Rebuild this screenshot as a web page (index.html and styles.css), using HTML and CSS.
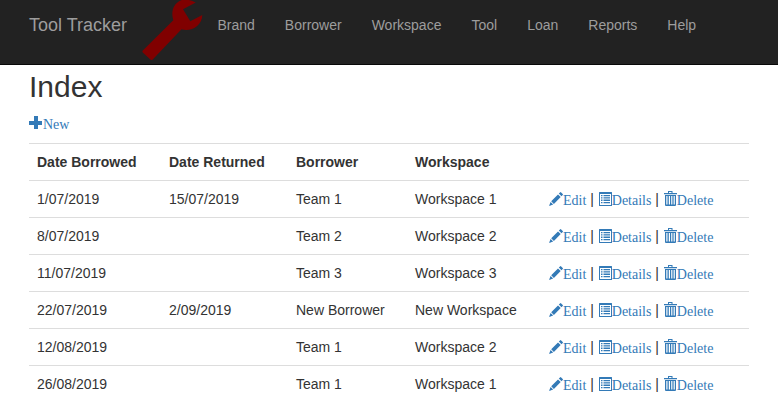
FILE: index.html
```
<!DOCTYPE html>
<html lang="en">
<head>
<meta charset="utf-8">
<title>Index - Tool Tracker</title>
<link rel="stylesheet" href="styles.css">
</head>
<body>
<svg class="sprite" aria-hidden="true">
  <symbol id="plus" viewBox="0 0 14 14"><path d="M5 0h4v5h4v4H9v4H5V9H0V5h5z"/></symbol>
  <symbol id="pencil" viewBox="0 0 14 14"><path d="M11 .4q.6-.6 1.200 0l1.500 1.500q.6.600 0 1.200l-1.200 1.200-2.700-2.700zM9 2.400l2.700 2.700-6.800 6.900-2.700-2.700zM1.600 10l2.600 2.600L0 14z"/></symbol>
  <symbol id="list" viewBox="0 0 14 14"><path fill-rule="evenodd" d="M1.500 0h12q.5 0 .5.500v13q0 .5-.5.500h-12q-.5 0-.5-.500V.5Q1 0 1.500 0zM2 2v11h11V2zM3 3h1.500v1.300H3zm2.500 0H12v1.300H5.500zM3 5.300h1.500v1.300H3zm2.500 0H12v1.300H5.500zM3 7.600h1.500v1.300H3zm2.500 0H12v1.300H5.500zM3 9.900h1.500v1.300H3zm2.500 0H12v1.300H5.500z"/></symbol>
  <symbol id="trash" viewBox="0 0 14 15"><path fill-rule="evenodd" d="M5 0h4.500v2H14v1.200H1V2h4zm1 1v1h2.500V1zM2 4h11v10q0 1-1 1H3q-1 0-1-1zM3.300 5v8.500h1.200V5zm2.500 0v8.500H7V5zm2.400 0v8.500h1.200V5zm2.400 0v8.500h1.200V5z"/></symbol>
</svg>
<nav class="navbar">
  <a class="brand">Tool Tracker</a>
  <svg class="wrench" viewBox="0 0 62 62" aria-hidden="true"><path d="M.8 50.500Q-.1 51.500.8 52.500L8.700 59.700Q9.700 60.500 10.700 59.500L39.500 29.300C49 32 60 26 60.300 15L48.300 21.300 41 9.300 53.700 2.500C49 0 43-1.500 38.500.5 32 3.500 28.500 11 31.300 20.300Z"/></svg>
  <ul class="menu">
    <li>Brand</li><li>Borrower</li><li>Workspace</li><li>Tool</li><li>Loan</li><li>Reports</li><li>Help</li>
  </ul>
</nav>
<main class="content">
  <h2>Index</h2>
  <p class="create"><a class="action"><svg><use href="#plus"/></svg>New</a></p>
  <table class="table">
    <colgroup><col class="borrowed"><col class="returned"><col class="borrower"><col class="workspace"><col></colgroup>
    <tr><th>Date Borrowed</th><th>Date Returned</th><th>Borrower</th><th>Workspace</th><th></th></tr>
    <tr><td>1/07/2019</td><td>15/07/2019</td><td>Team 1</td><td>Workspace 1</td><td><a class="action"><svg><use href="#pencil"/></svg>Edit</a> | <a class="action"><svg><use href="#list"/></svg>Details</a> | <a class="action"><svg class="bin"><use href="#trash"/></svg>Delete</a></td></tr>
    <tr><td>8/07/2019</td><td></td><td>Team 2</td><td>Workspace 2</td><td><a class="action"><svg><use href="#pencil"/></svg>Edit</a> | <a class="action"><svg><use href="#list"/></svg>Details</a> | <a class="action"><svg class="bin"><use href="#trash"/></svg>Delete</a></td></tr>
    <tr><td>11/07/2019</td><td></td><td>Team 3</td><td>Workspace 3</td><td><a class="action"><svg><use href="#pencil"/></svg>Edit</a> | <a class="action"><svg><use href="#list"/></svg>Details</a> | <a class="action"><svg class="bin"><use href="#trash"/></svg>Delete</a></td></tr>
    <tr><td>22/07/2019</td><td>2/09/2019</td><td>New Borrower</td><td>New Workspace</td><td><a class="action"><svg><use href="#pencil"/></svg>Edit</a> | <a class="action"><svg><use href="#list"/></svg>Details</a> | <a class="action"><svg class="bin"><use href="#trash"/></svg>Delete</a></td></tr>
    <tr><td>12/08/2019</td><td></td><td>Team 1</td><td>Workspace 2</td><td><a class="action"><svg><use href="#pencil"/></svg>Edit</a> | <a class="action"><svg><use href="#list"/></svg>Details</a> | <a class="action"><svg class="bin"><use href="#trash"/></svg>Delete</a></td></tr>
    <tr><td>26/08/2019</td><td></td><td>Team 1</td><td>Workspace 1</td><td><a class="action"><svg><use href="#pencil"/></svg>Edit</a> | <a class="action"><svg><use href="#list"/></svg>Details</a> | <a class="action"><svg class="bin"><use href="#trash"/></svg>Delete</a></td></tr>
  </table>
</main>
</body>
</html>
```
FILE: styles.css
```
* { box-sizing: border-box; }
body {
  margin: 0;
  overflow: hidden;
  font: 14px/20px "Liberation Sans", Arial, sans-serif;
  color: #333;
  background: #fff;
}
.sprite { display: none; }
.navbar {
  display: flex;
  height: 65px;
  padding-left: 29px;
  background: #222;
  border-bottom: 1px solid #080808;
  color: #9d9d9d;
}
.brand { width: 113px; padding-top: 15px; font-size: 18px; }
.wrench { width: 62px; height: 62px; fill: #800000; flex: none; }
.menu { display: flex; margin: 0 0 0 -1.5px; padding: 15px 0 0; list-style: none; }
.menu li { padding: 0 15px; }
.content { padding: 0 29px; }
h2 { margin: 5px 0 10px; font-size: 30px; font-weight: 400; line-height: 33px; }
.create { margin: 0 0 10px; height: 20px; }
.action {
  display: inline-block;
  position: relative;
  top: 1px;
  font-family: "Liberation Serif", "Times New Roman", serif;
  line-height: 14px;
  color: #337ab7;
}
.action svg {
  width: 14px;
  height: 14px;
  fill: currentColor;
  vertical-align: -1px;
}
.action .bin { height: 15px; margin-top: -1px; }
.table {
  width: 720px;
  table-layout: fixed;
  border-collapse: separate;
  border-spacing: 0;
}
.borrowed { width: 132px; }
.returned { width: 127px; }
.borrower { width: 119px; }
.workspace { width: 134px; }
th, td {
  height: 37px;
  padding: 8px;
  border-top: 1px solid #ddd;
  text-align: left;
  vertical-align: top;
  white-space: nowrap;
}
```
